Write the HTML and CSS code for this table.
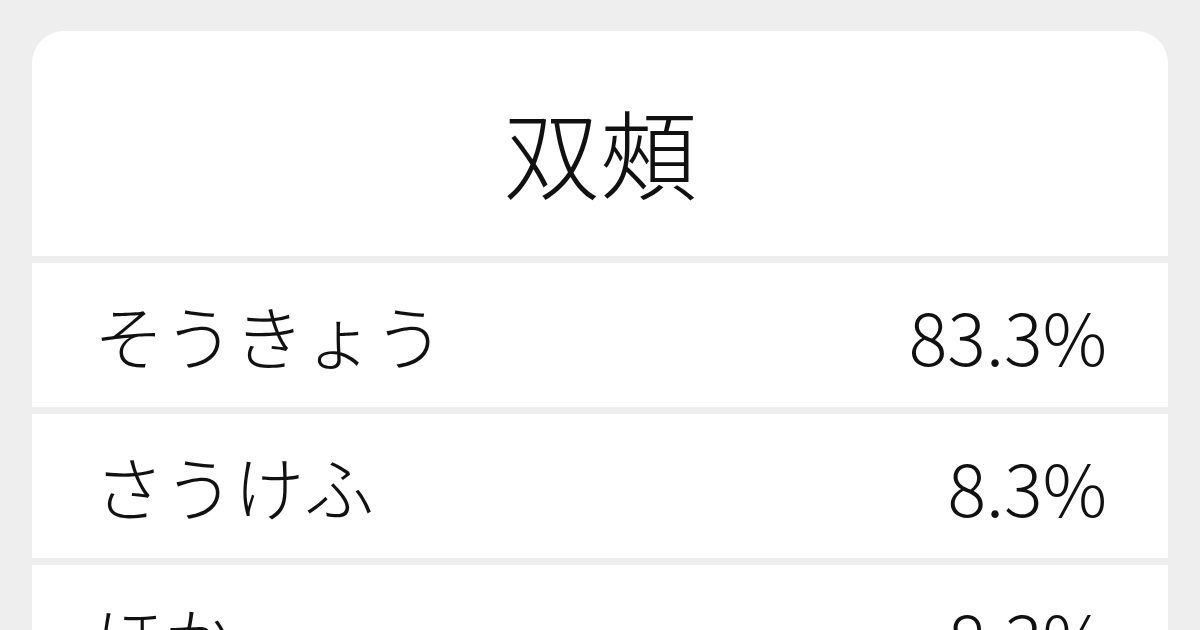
FILE: index.html
```html
<!DOCTYPE html>
<html lang="ja">
<head>
<meta charset="utf-8">
<link rel="stylesheet" href="styles.css">
</head>
<body>
<div class="card">
  <div class="header"><h1 class="title">双頰</h1></div>
  <div class="row"><span class="reading">そうきょう</span><span class="pct">83.3%</span></div>
  <div class="row"><span class="reading">さうけふ</span><span class="pct">8.3%</span></div>
  <div class="row"><span class="reading">ほか</span><span class="pct">8.3%</span></div>
</div>
</body>
</html>
```
FILE: styles.css
```css
html, body {
  margin: 0;
  padding: 0;
}
body {
  background: #eeeeee;
  width: 1200px;
  height: 630px;
  overflow: hidden;
  font-family: "Noto Sans CJK JP", "Noto Sans", sans-serif;
  font-weight: 300;
  color: #111111;
}
.card {
  margin: 31px 32px 0 32px;
  display: flex;
  flex-direction: column;
  gap: 7px;
}
.header {
  background: #ffffff;
  border-radius: 32px 32px 0 0;
  height: 225px;
  display: flex;
  align-items: center;
  justify-content: center;
}
.title {
  margin: 12px 0 0 0;
  font-size: 97px;
  font-weight: 300;
  line-height: 1;
}
.row {
  background: #ffffff;
  height: 144px;
  padding: 0 61px 0 62px;
  display: flex;
  align-items: center;
  justify-content: space-between;
  font-size: 70px;
  line-height: 1;
}
.pct {
  font-size: 72px;
}
```
